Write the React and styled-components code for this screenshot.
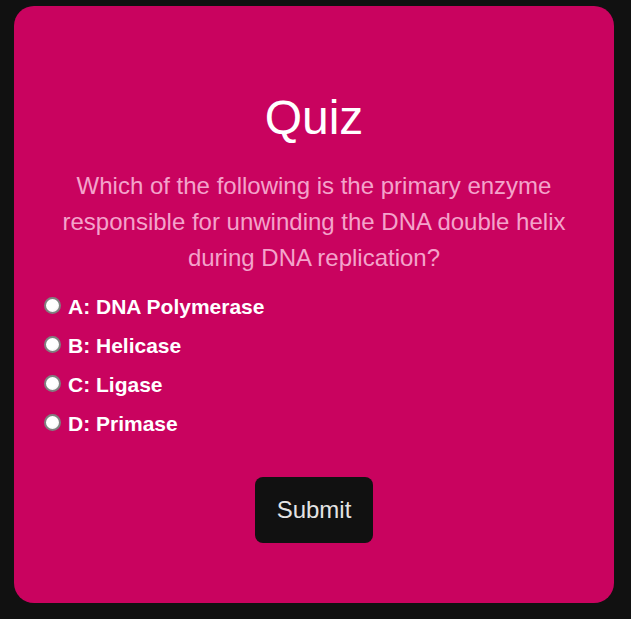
import React, { useState } from "react"
import styled, { createGlobalStyle } from "styled-components"

const GlobalStyle = createGlobalStyle`
  html, body {
    margin: 0;
    background: #111111;
    font-family: "Liberation Sans", Arial, sans-serif;
  }
`

const Page = styled.div`
  padding: 6px 14px;
`
const Card = styled.div`
  width: 600px;
  box-sizing: border-box;
  padding: 84px 26px 60px;
  border-radius: 20px;
  background-color: #c9035f;
  text-align: center;
`
const Title = styled.h1`
  margin: 0;
  font-size: 48px;
  font-weight: 400;
  line-height: 55px;
  color: #ffffff;
`
const Question = styled.p`
  margin: 23px 0 0;
  font-size: 24px;
  line-height: 36px;
  color: #f4a3cb;
`
const Options = styled.div`
  margin-top: 19px;
  text-align: left;
`
const Option = styled.label`
  display: block;
  margin-bottom: 16px;
  font-size: 21px;
  font-weight: 700;
  line-height: 23px;
  color: #ffffff;
  cursor: pointer;
  &:last-child {
    margin-bottom: 0;
  }
`
const Radio = styled.input`
  appearance: none;
  box-sizing: border-box;
  width: 17px;
  height: 17px;
  margin: 0 7px 0 4px;
  border: 2px solid #808080;
  border-radius: 50%;
  background: radial-gradient(circle at 40% 35%, #ffffff 55%, #e6e6e6 100%);
  cursor: pointer;
  &:checked {
    background: radial-gradient(circle, #111111 35%, #ffffff 40%);
  }
`
const SubmitButton = styled.button`
  margin-top: 42px;
  padding: 19px 22px;
  border: none;
  border-radius: 8px;
  background-color: #111111;
  color: #e4e4e4;
  font-family: inherit;
  font-size: 24px;
  line-height: 28px;
  cursor: pointer;
`

const choices = [
  { key: "A", text: "DNA Polymerase" },
  { key: "B", text: "Helicase" },
  { key: "C", text: "Ligase" },
  { key: "D", text: "Primase" },
]

const App = () => {
  const [answer, setAnswer] = useState(null)

  return (
    <Page>
      <GlobalStyle />
      <Card>
        <Title>Quiz</Title>
        <Question>
          Which of the following is the primary enzyme responsible for
          unwinding the DNA double helix during DNA replication?
        </Question>
        <Options>
          {choices.map(({ key, text }) => (
            <Option key={key}>
              <Radio
                type="radio"
                name="answer"
                checked={answer === key}
                onChange={() => setAnswer(key)}
              />
              {key}: {text}
            </Option>
          ))}
        </Options>
        <SubmitButton>Submit</SubmitButton>
      </Card>
    </Page>
  )
}

export default App
